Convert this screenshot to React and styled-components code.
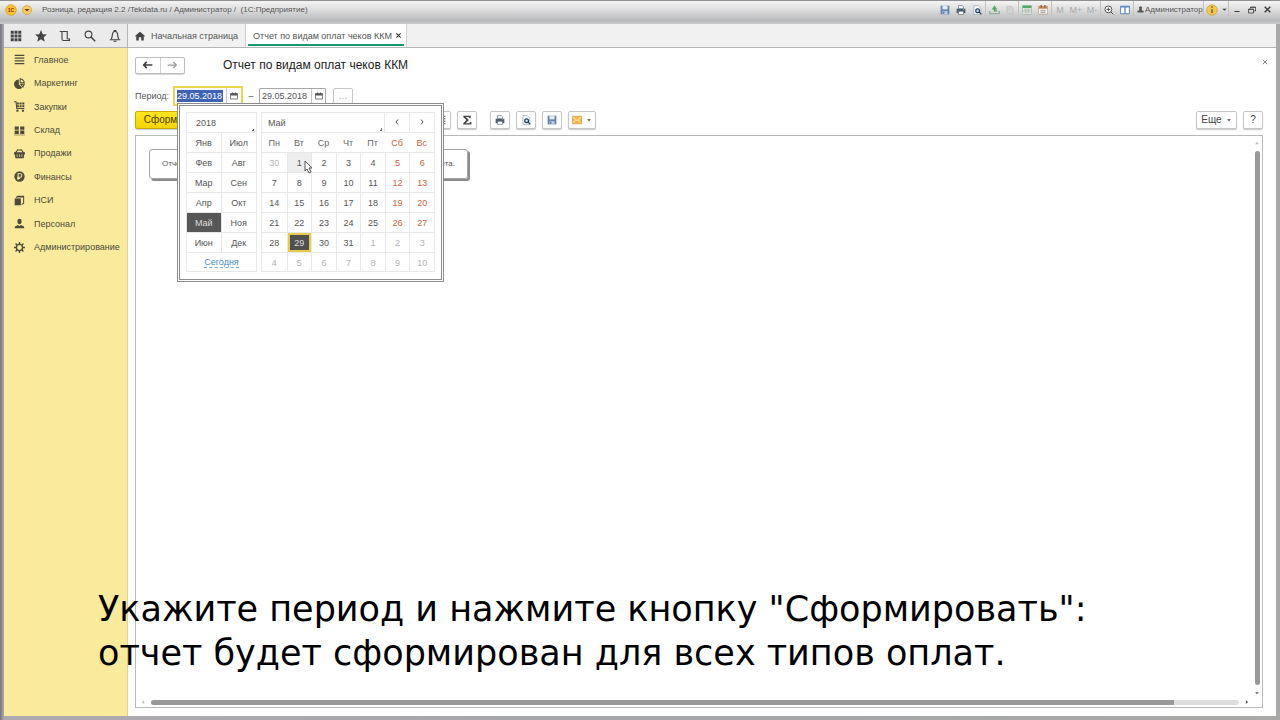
import React from 'react';
import styled, { createGlobalStyle, css } from 'styled-components';

const GlobalStyle = createGlobalStyle`
  * { box-sizing: border-box; }

  body {
    margin: 0;
    font-family: 'Liberation Sans', Arial, sans-serif;
    font-size: 9px;
    line-height: 12px;
    color: #555;
  }

  button, input, select {
    margin: 0;
    padding: 0;
    border: 0;
    background: none;
    font: inherit;
    color: inherit;
  }
`;

const Window = styled.div`
  position: relative;
  display: flex;
  flex-direction: column;
  height: 100vh;
  padding: 0 4px 4px;
  background: linear-gradient(90deg, #77737c 0, #aeabb0 4px, #a3a5a8 50%, #a9a9a7 100%);
  overflow: hidden;
`;

const TitleBar = styled.header`
  display: flex;
  align-items: center;
  flex: none;
  height: 24px;
  margin: 0 -4px;
  padding: 0 5px 6px 3px;
  border-top: 1px solid #8e8e90;
  background: linear-gradient(#f4f4f4 0, #dcdcdd 40%, #b8b9bb 85%, #c9c9cb 100%);
  font-family: 'Liberation Sans Narrow', 'Liberation Sans', Arial, sans-serif;
`;

const RoundButton = styled.button`
  display: flex;
  width: 16px;
  height: 14px;
  align-items: center;
  justify-content: center;
`;

const WindowTitle = styled.div`
  flex: 1;
  padding-left: 7px;
  font-size: 8px;
  white-space: pre;
`;

const ToolGroup = styled.div`
  display: flex;
  align-items: center;
  height: 17px;
  border-left: ${p => (p.$first ? 0 : 1)}px solid #c4c0bc;
`;

const Tool = styled.button`
  display: flex;
  align-items: center;
  justify-content: center;
  width: ${p => p.$width || 16}px;
  height: 16px;
  color: ${p => (p.$disabled ? '#a9a9a9' : '#3c3c3c')};
`;

const User = styled.button`
  display: flex;
  align-items: center;
  gap: 1px;
  width: 69px;
  padding-left: 3px;
  font-size: 8px;
`;

const TopBar = styled.div`
  display: flex;
  flex: none;
  height: 24px;
  border-bottom: 1px solid #b5b5b5;
  background: #f1f1f1;
`;

const QuickTools = styled.div`
  display: grid;
  grid-template-columns: repeat(5, 1fr);
  width: 124px;
  border-right: 1px solid #b5b5b5;
  background: #ebebec;

  button {
    display: flex;
    align-items: center;
    justify-content: center;
  }
`;

const Tab = styled.button`
  position: relative;
  display: flex;
  align-items: center;
  gap: ${p => (p.$active ? 3 : 6)}px;
  padding: 0 ${p => (p.$active ? 4 : 7)}px 0 7px;
  border-right: 1px solid #cfcfcf;
  white-space: nowrap;

  ${p => p.$active && css`
    background: #fff;

    &::after {
      content: '';
      position: absolute;
      right: 2px;
      bottom: 1px;
      left: 2px;
      height: 2px;
      background: #159a72;
    }
  `}
`;

const Body = styled.div`
  display: flex;
  flex: 1;
  min-height: 0;
`;

const Sidebar = styled.nav`
  flex: none;
  width: 124px;
  border-right: 1px solid #e0d48e;
  background: #f9ea9c;
`;

const Sections = styled.ul`
  display: grid;
  grid-template-rows: repeat(9, 1fr);
  height: 211px;
  margin: 0;
  padding: 0;
  list-style: none;
`;

const Section = styled.a`
  display: flex;
  align-items: center;
  gap: 9px;
  height: 100%;
  padding-left: 10px;
  color: #4d4a3c;
  text-decoration: none;
`;

const Main = styled.main`
  display: flex;
  flex: 1;
  flex-direction: column;
  min-width: 0;
  padding: 8px 13px 8px 7px;
  background: #fff;
`;

const HeadRow = styled.div`
  display: flex;
  align-items: center;
  height: 18px;
`;

const NavButtons = styled.div`
  display: flex;
  width: 50px;
  height: 17px;
  border: 1px solid #bdbdbd;
  border-radius: 2px;
  box-shadow: 0 1px 1px #d5d5d5;
  color: #3c3c3c;

  button {
    display: flex;
    flex: 1;
    align-items: center;
    justify-content: center;
  }

  button + button {
    border-left: 1px solid #d0d0d0;
  }
`;

const Heading = styled.h1`
  flex: 1;
  margin: 0 0 0 38px;
  font-size: 12px;
  font-weight: normal;
  line-height: 16px;
  color: #1c1c1c;
`;

const CloseForm = styled.button`
  display: flex;
  align-self: flex-start;
  margin-right: -8px;
  padding: 3px;
`;

const PeriodRow = styled.div`
  position: relative;
  display: flex;
  align-items: center;
  height: 20px;
  margin-top: 12px;
`;

const PeriodLabel = styled.label`
  width: 38px;
`;

const DateField = styled.div`
  display: flex;
  align-items: center;
  width: ${p => (p.$active ? 70 : 67)}px;
  height: ${p => (p.$active ? 20 : 16)}px;
  border: ${p => (p.$active ? '2px solid #ecd54a' : '1px solid #a8a8a8')};
  border-radius: 1px;

  input {
    width: 46px;
    height: 12px;
    margin-left: 2px;
    outline: 0;
    ${p => p.$active && 'background: #3e62b4; color: #fff;'}
  }

  button {
    display: flex;
    flex: 1;
    align-items: center;
    justify-content: center;
    height: 100%;
    margin-left: 3px;
    border-left: 1px solid #c8c8c8;
  }
`;

const Dash = styled.span`
  width: 16px;
  text-align: center;
`;

const PushButton = styled.button`
  display: flex;
  align-items: center;
  justify-content: center;
  gap: 4px;
  flex: none;
  width: ${p => p.$width || 20}px;
  height: 18px;
  border: 1px solid #c6c6c6;
  border-radius: 2px;
  background: #fff;
  box-shadow: 0 1px 1px #c9c9c9;
  color: #444;
  font-size: 10px;
`;

const MoreButton = styled(PushButton)`
  height: 16px;
  margin-left: 7px;
  color: #aaa;
  box-shadow: none;
`;

const PrimaryButton = styled(PushButton)`
  border-color: #c9ab00;
  background: linear-gradient(#ffe61f, #f5d400);
  color: #4a3f00;
`;

const CommandBar = styled.div`
  display: flex;
  align-items: center;
  gap: 6px;
  height: 20px;
  margin-top: 4px;
`;

const CommandGroup = styled.div`
  display: flex;
  gap: 6px;
  margin-left: ${p => p.$gap || 0}px;
`;

const Spacer = styled.div`
  flex: 1;
`;

const Report = styled.section`
  display: grid;
  grid-template-columns: 1fr 10px;
  grid-template-rows: 1fr 10px;
  flex: 1;
  min-height: 0;
  margin-top: 5px;
  border: 1px solid #b9b9b9;
`;

const Sheet = styled.div`
  padding: 13px;
`;

const Message = styled.div`
  display: flex;
  align-items: center;
  justify-content: space-between;
  width: 319px;
  height: 30px;
  padding: 0 12px;
  border: 1px solid #a5a5a5;
  border-radius: 3px;
  box-shadow: 2px 2px 0 #8b8b8b;
  font-size: 8px;
  white-space: nowrap;
`;

const Scrollbar = styled.div`
  display: flex;
  flex-direction: ${p => (p.$vertical ? 'column' : 'row')};
  align-items: center;
  justify-content: space-between;
  gap: 5px;
  padding: ${p => (p.$vertical ? '4px 0 1px' : '0 2px 0 4px')};

  svg {
    flex: none;
  }
`;

const Track = styled.div`
  flex: 1;
  ${p => (p.$vertical ? 'width' : 'height')}: 5px;
  border-radius: 3px;
  background: linear-gradient(90deg, #999 ${p => p.$filled}%, #dedede ${p => p.$filled}%);
`;

const Popup = styled.div`
  position: absolute;
  z-index: 2;
  top: 17px;
  left: 42px;
  display: flex;
  gap: 4px;
  width: 267px;
  height: 179px;
  padding: 6px 6px 7px;
  border: 3px double #8c8c8c;
  background: #fff;
`;

const Years = styled.div`
  flex: none;
  width: 71px;
  border: 1px solid #e8e8e8;
`;

const Picker = styled.select`
  appearance: none;
  display: block;
  flex: 1;
  width: 100%;
  height: 19px;
  padding-left: ${p => p.$indent || 6}px;
  border-radius: 0;
  background: linear-gradient(135deg, transparent 50%, #777 50%) no-repeat right 2px bottom 1px / 3px 3px;
`;

const Months = styled.div`
  display: grid;
  grid-template-columns: 1fr 1fr;
  grid-auto-rows: 20px;
`;

const Month = styled.button`
  border-top: 1px solid #e8e8e8;

  &:nth-child(odd) {
    border-right: 1px solid #e8e8e8;
  }

  ${p => p.$selected && css`
    background: #575757;
    color: #ddd;
  `}
`;

const Today = styled.button`
  display: block;
  width: 100%;
  height: 18px;
  border-top: 1px solid #e8e8e8;
  color: #4a8cc8;

  span {
    border-bottom: 1px dashed #7dabd6;
  }
`;

const Calendar = styled.div`
  flex: 1;
  border: 1px solid #e8e8e8;
`;

const MonthBar = styled.div`
  display: flex;
  height: 19px;

  button {
    width: 25px;
    border-left: 1px solid #e8e8e8;
  }
`;

const DayTable = styled.table`
  width: 100%;
  border-collapse: separate;
  border-spacing: 0;
  table-layout: fixed;

  th, td {
    height: 20px;
    padding: 0;
    border-top: 1px solid #e8e8e8;
    text-align: center;
    font-weight: normal;
  }

  th {
    color: #666;
  }

  td + td {
    border-left: 1px solid #e8e8e8;
  }

  th:nth-child(n + 6) {
    color: #d0633a;
  }
`;

const Day = styled.button`
  display: block;
  width: 100%;
  height: 19px;
  color: ${p => (p.$outside ? '#b3b3b3' : p.$weekend ? '#d0633a' : '#555')};
  ${p => p.$hover && 'background: #eee;'}

  ${p => p.$selected && css`
    border: 2px solid #e6cb4c;
    background: #505050;
    color: #ddd;
  `}
`;

const Pointer = styled.svg`
  position: absolute;
  top: 54px;
  left: 124px;
`;

const Caption = styled.p`
  position: absolute;
  z-index: 3;
  top: 587px;
  left: 98px;
  margin: 0;
  font-family: 'DejaVu Sans', Verdana, sans-serif;
  font-size: 35px;
  line-height: 44px;
  color: #000;
  white-space: nowrap;
  pointer-events: none;
`;

const iconShapes = {
  logo: <><circle cx="8" cy="8" r="7" fill="#f7c52c" stroke="#df9b1d" /><text x="8" y="11" fontSize="7" fontWeight="bold" textAnchor="middle" fill="#a03010">1С</text></>,
  menu: <><circle cx="8" cy="8" r="6" fill="#f8cf62" stroke="#d59a3c" /><path d="M4.500 6.500h7L8 10z" fill="#7a3a10" /></>,
  save: <><path d="M1 1h14v14H1z" fill="#6684ad" /><path d="M4 1h8v6H4z" fill="#e6edf6" /><path d="M4 10h8v5H4z" fill="#c3d2e4" /><path d="M5 11h2v3H5z" fill="#486a96" /></>,
  print: <><path d="M4 1h6l2 2v3H4z" fill="#fff" stroke="#48647c" /><path d="M1 6h14v7H1z" fill="#4a5c6c" /><path d="M4 10h8v5H4z" fill="#fff" stroke="#48647c" /><path d="M11 7h2v1h-2z" fill="#8fd0a0" /></>,
  preview: <><path d="M3 1h7l4 4v10H3z" fill="#fff" stroke="#7d99ae" /><circle cx="9" cy="9" r="3" fill="#dceaf5" stroke="#1f3f5c" strokeWidth="2" /><path d="m11 11 4 4" stroke="#1f3f5c" strokeWidth="2" /></>,
  upload: <><path d="M1 10v4h14v-4" fill="none" stroke="#93b09a" strokeWidth="2" /><path d="M5 12V7h3V4l6 4-6 4V9H7v3z" fill="#47a65c" transform="rotate(-90 8 8)" /></>,
  page: <path d="M3 2h7l3 3v9H3z" fill="#d2d2d2" stroke="#bbb" />,
  table: <><path d="M1 1h14v14H1z" fill="#fff" stroke="#8ba394" /><path d="M1 1h14v4H1z" fill="#4fac69" /><path d="M1 8h14M1 11h14M5 5v10M8 5v10M11 5v10" stroke="#8ba394" /></>,
  calendar: <><path d="M1 2h14v13H1z" fill="#fff" stroke="#a58f7c" /><path d="M1 2h14v4H1z" fill="#c78757" /><path d="M5 0v4M11 0v4" stroke="#8b5a34" strokeWidth="2" /><path d="M4 9h8M4 12h8M5 7v7M8 7v7M11 7v7" stroke="#a58f7c" /></>,
  zoom: <><circle cx="7" cy="7" r="5.500" fill="#fff" stroke="#4c4c4c" strokeWidth="1.500" /><path d="M4 7h6M7 4v6M11 11l4 4" stroke="#444" strokeWidth="1.500" fill="none" /></>,
  panels: <><path d="M1 2h14v12H1z" fill="#fff" stroke="#4e84c0" strokeWidth="1.500" /><path d="M1 3h14M8 2v12" stroke="#4e84c0" strokeWidth="2" /></>,
  user: <><circle cx="8" cy="4" r="3.500" /><path d="M5 7h6v3l4 1v4H1v-4l4-1z" /></>,
  info: <><circle cx="8" cy="8" r="7" fill="#f4c84b" stroke="#d3a13a" /><path d="M7 7h2v5H7zM7 3h2v2H7z" fill="#735b26" /></>,
  down: <path d="M3 6h10l-5 5z" />,
  minimize: <path d="M3 10h10v2H3z" />,
  restore: <path d="M5 5V2h10v8h-4M5 3h10M1 6h10v8H1zM1 7h10" fill="none" stroke="currentColor" strokeWidth="1.500" />,
  close: <path d="m3 3 10 10M13 3 3 13" fill="none" stroke="currentColor" strokeWidth="2.500" />,
  thinClose: <path d="m2 2 12 12M14 2 2 14" fill="none" stroke="currentColor" strokeWidth="2" />,
  apps: <path d="M1 1h4v4H1zM6 1h4v4H6zM11 1h4v4h-4zM1 6h4v4H1zM6 6h4v4H6zM11 6h4v4h-4zM1 11h4v4H1zM6 11h4v4H6zM11 11h4v4h-4z" />,
  star: <path d="m8 0 2.300 5.500 5.700.5-4.400 3.700L13 15.500 8 12.300l-5 3.200 1.400-5.800L0 6l5.700-.5z" />,
  history: <path d="M1 2h10v10M4 2v10c0 1 1 2 2 2h8v-2h-3" fill="none" stroke="currentColor" strokeWidth="1.500" />,
  search: <><circle cx="6" cy="6" r="4.500" fill="none" stroke="currentColor" strokeWidth="1.500" /><path d="m9 9 6 6" stroke="currentColor" strokeWidth="2" /></>,
  bell: <path d="M1 13h14M3 12c2-3 1-6 2-8 1-3 5-3 6 0 1 2 0 5 2 8M7 2V0h2v2M6 15h4" fill="none" stroke="currentColor" strokeWidth="1.500" />,
  home: <path d="M8 1 0 8l1 1 1-1v7h4v-5h4v5h4V8l1 1 1-1z" />,
  lines: <path d="M1 2h14M1 6h14M1 10h14M1 14h14" stroke="currentColor" strokeWidth="1.500" />,
  pie: <><path d="M7 2v7l5 5A7 7 0 1 1 7 2z" /><path d="M9 1a7 7 0 0 1 6 6H9zM10 9h5l-2 4z" fill="none" stroke="currentColor" strokeWidth="1.500" /></>,
  cart: <><path d="M0 1h3l1 10h11" fill="none" stroke="currentColor" strokeWidth="1.500" /><path d="M4 2h3v3H4zM8 2h3v3H8zM12 2h3v3h-3zM4 6h3v3H4zM8 6h3v3H8zM12 6h3v3h-3z" /><circle cx="5" cy="14" r="1.700" /><circle cx="13" cy="14" r="1.700" /></>,
  boxes: <path d="M1 2h6v5H1zM9 2h6v5H9zM1 8h6v5H1zM9 8h6v5H9zM0 14h16v1H0z" />,
  basket: <><path d="m2 7 4-5M14 7l-4-5M6 3h4" fill="none" stroke="currentColor" strokeWidth="1.500" /><path d="M0 6h16v3h-1l-1 6H2L1 9H0zM4 9v4h1V9zM7.500 9v4h1V9zM11 9v4h1V9z" fillRule="evenodd" /></>,
  ruble: <><circle cx="8" cy="8" r="7.500" /><path d="M6 13V4h3a2.500 2.500 0 0 1 0 5H4.500M4.500 11H9" fill="none" stroke="#f9ea9c" strokeWidth="1.500" /></>,
  books: <><path d="M1 5h9v10H1z" /><path d="M3 4 5 2h9v10l-3 2M5 3h8" fill="none" stroke="currentColor" strokeWidth="1.500" /></>,
  person: <><path d="M5 4c0-4 6-4 6 0s-1 5-3 5-3-1-3-5z" /><path d="M1 15c0-4 3-4 5-5l2 2 2-2c2 1 5 1 5 5z" /></>,
  gear: <><circle cx="8" cy="8" r="4.500" fill="none" stroke="currentColor" strokeWidth="2" /><path d="M8 0v3M8 13v3M0 8h3M13 8h3M2.300 2.300l2 2M11.700 11.700l2 2M2.300 13.700l2-2M11.700 4.300l2-2" stroke="currentColor" strokeWidth="2" /></>,
  back: <path d="M1 8h14M6 3 1 8l5 5" fill="none" stroke="currentColor" strokeWidth="2.500" />,
  forward: <path d="M1 8h14M10 3l5 5-5 5" fill="none" stroke="currentColor" strokeWidth="2" />,
  date: <><path d="M1 3h14v11H1z" fill="none" stroke="currentColor" strokeWidth="1.500" /><path d="M1 3h14v4H1zM4 1h2v3H4zM10 1h2v3h-2z" /></>,
  sum: <path d="M2 1h12v4h-2L11 3H6l5 5-5 5h6l1-2h2v4H2v-2l5-5-5-5z" />,
  mail: <><path d="M0 2h16v12H0z" fill="#eeb851" stroke="#cc913a" /><path d="m1 3 7 6 7-6M1 13l5-5M15 13l-5-5" fill="none" stroke="#fff0c7" strokeWidth="1.500" /></>,
  chevronLeft: <path d="m10 3-4 5 4 5" fill="none" stroke="currentColor" strokeWidth="2" />,
  chevronRight: <path d="m6 3 4 5-4 5" fill="none" stroke="currentColor" strokeWidth="2" />,
  left: <path d="M11 3v10L5 8z" />,
  right: <path d="M5 3v10l6-5z" />,
  up: <path d="M3 11h10L8 5z" />,
};

const Icon = ({ name, size = 10, color = 'currentColor' }) => (
  <svg width={size} height={size} viewBox="0 0 16 16" fill="currentColor" color={color} aria-hidden="true">
    {iconShapes[name]}
  </svg>
);

const sections = [
  ['lines', 'Главное'],
  ['pie', 'Маркетинг'],
  ['cart', 'Закупки'],
  ['boxes', 'Склад'],
  ['basket', 'Продажи'],
  ['ruble', 'Финансы'],
  ['books', 'НСИ'],
  ['person', 'Персонал'],
  ['gear', 'Администрирование'],
];

const months = ['Янв', 'Июл', 'Фев', 'Авг', 'Мар', 'Сен', 'Апр', 'Окт', 'Май', 'Ноя', 'Июн', 'Дек'];
const weekdays = ['Пн', 'Вт', 'Ср', 'Чт', 'Пт', 'Сб', 'Вс'];

const weeks = [0, 1, 2, 3, 4, 5].map(week =>
  weekdays.map((_, i) => {
    const offset = week * 7 + i;
    const outside = offset < 1 || offset > 31;
    const day = offset < 1 ? 30 : offset > 31 ? offset - 31 : offset;
    return { day, outside, weekend: i > 4 };
  })
);

const TitleTools = () => (
  <>
    <ToolGroup $first>
      {['save', 'print', 'preview'].map(n => <Tool key={n} aria-label={n}><Icon name={n} /></Tool>)}
    </ToolGroup>
    <ToolGroup>
      <Tool aria-label="upload"><Icon name="upload" size={11} /></Tool>
      <Tool aria-label="page"><Icon name="page" /></Tool>
    </ToolGroup>
    <ToolGroup>
      <Tool aria-label="table"><Icon name="table" /></Tool>
      <Tool aria-label="calendar"><Icon name="calendar" /></Tool>
    </ToolGroup>
    <ToolGroup>
      {['M', 'M+', 'M-'].map(n => <Tool key={n} $disabled>{n}</Tool>)}
    </ToolGroup>
    <ToolGroup>
      <Tool aria-label="zoom"><Icon name="zoom" /></Tool>
      <Tool aria-label="panels"><Icon name="panels" /></Tool>
    </ToolGroup>
    <ToolGroup>
      <User><Icon name="user" size={7} />Администратор</User>
    </ToolGroup>
    <ToolGroup>
      <Tool aria-label="info"><Icon name="info" size={12} /></Tool>
      <Tool $width={8} aria-label="more"><Icon name="down" size={7} /></Tool>
    </ToolGroup>
    <ToolGroup>
      <Tool aria-label="minimize"><Icon name="minimize" size={8} /></Tool>
      <Tool $width={14} aria-label="restore"><Icon name="restore" size={8} /></Tool>
      <Tool aria-label="close"><Icon name="close" size={9} /></Tool>
    </ToolGroup>
  </>
);

const DatePopup = () => (
  <Popup>
    <Years>
      <Picker aria-label="Год" $indent={9} defaultValue="2018"><option>2018</option></Picker>
      <Months>
        {months.map(m => <Month key={m} $selected={m === 'Май'}>{m}</Month>)}
      </Months>
      <Today><span>Сегодня</span></Today>
    </Years>
    <Calendar>
      <MonthBar>
        <Picker aria-label="Месяц" defaultValue="Май"><option>Май</option></Picker>
        <button aria-label="prev"><Icon name="chevronLeft" size={8} /></button>
        <button aria-label="next"><Icon name="chevronRight" size={8} /></button>
      </MonthBar>
      <DayTable>
        <thead>
          <tr>{weekdays.map(d => <th key={d}>{d}</th>)}</tr>
        </thead>
        <tbody>
          {weeks.map((week, i) => (
            <tr key={i}>
              {week.map(({ day, outside, weekend }) => (
                <td key={day}>
                  <Day
                    $outside={outside}
                    $weekend={weekend}
                    $hover={day === 1 && !outside}
                    $selected={day === 29}
                  >
                    {day}
                  </Day>
                </td>
              ))}
            </tr>
          ))}
        </tbody>
      </DayTable>
    </Calendar>
    <Pointer width="9" height="14" viewBox="0 0 9 14">
      <path d="M1 1v10l2-2 2 4 2-1-2-4h3z" fill="#fff" stroke="#555" />
    </Pointer>
  </Popup>
);

export default function App() {
  return (
    <>
      <GlobalStyle />
      <Window>
        <TitleBar>
          <RoundButton aria-label="1С"><Icon name="logo" size={12} /></RoundButton>
          <RoundButton aria-label="menu"><Icon name="menu" size={12} /></RoundButton>
          <WindowTitle>{'Розница, редакция 2.2 /Tekdata.ru / Администратор /  (1С:Предприятие)'}</WindowTitle>
          <TitleTools />
        </TitleBar>

        <TopBar>
          <QuickTools>
            {['apps', 'star', 'history', 'search', 'bell'].map(n => (
              <button key={n} aria-label={n}><Icon name={n} size={12} color="#444" /></button>
            ))}
          </QuickTools>
          <Tab><Icon name="home" color="#444" />Начальная страница</Tab>
          <Tab $active>Отчет по видам оплат чеков ККМ<Icon name="close" size={7} color="#333" /></Tab>
        </TopBar>

        <Body>
          <Sidebar>
            <Sections>
              {sections.map(([icon, title]) => (
                <li key={title}>
                  <Section href="#"><Icon name={icon} size={11} />{title}</Section>
                </li>
              ))}
            </Sections>
          </Sidebar>

          <Main>
            <HeadRow>
              <NavButtons>
                <button aria-label="Назад"><Icon name="back" /></button>
                <button aria-label="Вперед"><Icon name="forward" color="#999" /></button>
              </NavButtons>
              <Heading>Отчет по видам оплат чеков ККМ</Heading>
              <CloseForm aria-label="Закрыть"><Icon name="thinClose" size={6} /></CloseForm>
            </HeadRow>

            <PeriodRow>
              <PeriodLabel htmlFor="from">Период:</PeriodLabel>
              <DateField $active>
                <input id="from" defaultValue="29.05.2018" />
                <button aria-label="Выбрать"><Icon name="date" size={8} /></button>
              </DateField>
              <Dash>–</Dash>
              <DateField>
                <input aria-label="Конец периода" defaultValue="29.05.2018" />
                <button aria-label="Выбрать"><Icon name="date" size={8} /></button>
              </DateField>
              <MoreButton>...</MoreButton>
              <DatePopup />
            </PeriodRow>

            <CommandBar>
              <PrimaryButton $width={88}>Сформировать</PrimaryButton>
              <CommandGroup $gap={202}>
                <PushButton aria-label="list"><Icon name="lines" /></PushButton>
                <PushButton aria-label="sum"><Icon name="sum" /></PushButton>
              </CommandGroup>
              <CommandGroup $gap={7}>
                <PushButton aria-label="print"><Icon name="print" /></PushButton>
                <PushButton aria-label="preview"><Icon name="preview" /></PushButton>
                <PushButton aria-label="save"><Icon name="save" /></PushButton>
                <PushButton $width={28} aria-label="mail"><Icon name="mail" /><Icon name="down" size={6} /></PushButton>
              </CommandGroup>
              <Spacer />
              <PushButton $width={41}>Еще<Icon name="down" size={6} /></PushButton>
              <PushButton>?</PushButton>
            </CommandBar>

            <Report>
              <Sheet>
                <Message>
                  <span>Отчет не сформирован.</span>
                  <span>Нажмите "Сформировать" для получения отчета.</span>
                </Message>
              </Sheet>
              <Scrollbar $vertical>
                <Icon name="up" size={6} color="#bbb" />
                <Track $vertical $filled={100} />
                <Icon name="down" size={6} />
              </Scrollbar>
              <Scrollbar>
                <Icon name="left" size={6} color="#bbb" />
                <Track $filled={94} />
                <Icon name="right" size={6} />
              </Scrollbar>
            </Report>
          </Main>
        </Body>

        <Caption>
          Укажите период и нажмите кнопку "Сформировать":<br />
          отчет будет сформирован для всех типов оплат.
        </Caption>
      </Window>
    </>
  );
}
